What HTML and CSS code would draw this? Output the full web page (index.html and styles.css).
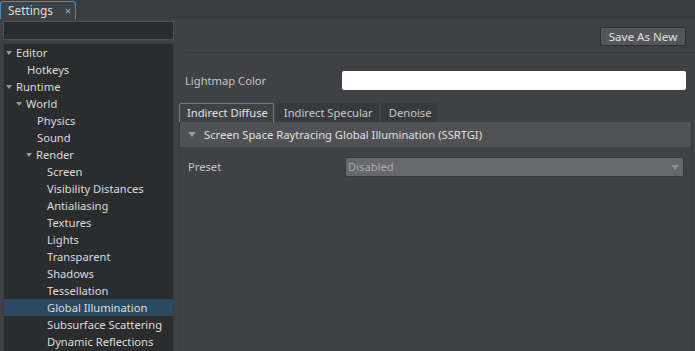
FILE: index.html
```html
<!DOCTYPE html>
<html lang="en">
<head>
  <meta charset="UTF-8">
  <title>Settings</title>
  <link rel="stylesheet" href="styles.css">
</head>
<body>
  <div class="tabstrip">
    <div class="doc-tab">Settings <span class="close">&#215;</span></div>
  </div>

  <div class="main">
    <div class="side">
      <div class="search"></div>
      <div class="tree">
        <div class="row l0"><span class="arrow"></span>Editor</div>
        <div class="row l1">Hotkeys</div>
        <div class="row l0"><span class="arrow"></span>Runtime</div>
        <div class="row l1"><span class="arrow"></span>World</div>
        <div class="row l2">Physics</div>
        <div class="row l2">Sound</div>
        <div class="row l2"><span class="arrow"></span>Render</div>
        <div class="row l3">Screen</div>
        <div class="row l3">Visibility Distances</div>
        <div class="row l3">Antialiasing</div>
        <div class="row l3">Textures</div>
        <div class="row l3">Lights</div>
        <div class="row l3">Transparent</div>
        <div class="row l3">Shadows</div>
        <div class="row l3">Tessellation</div>
        <div class="row l3 selected">Global Illumination</div>
        <div class="row l3">Subsurface Scattering</div>
        <div class="row l3">Dynamic Reflections</div>
      </div>
    </div>

    <div class="content">
      <div class="toolbar">
        <button class="btn">Save As New</button>
      </div>

      <div class="field top-field">
        <label>Lightmap Color</label>
        <div class="color-box"></div>
      </div>

      <div class="tabs">
        <div class="tab active">Indirect Diffuse</div>
        <div class="tab">Indirect Specular</div>
        <div class="tab">Denoise</div>
      </div>

      <div class="pane">
        <div class="group-head"><span class="arrow"></span>Screen Space Raytracing Global Illumination (SSRTGI)</div>
        <div class="field">
          <label>Preset</label>
          <div class="combo">Disabled<span class="combo-arrow"></span></div>
        </div>
      </div>
    </div>
  </div>
</body>
</html>
```

FILE: styles.css
```css
body {
  margin: 0;
  background: #404145;
  color: #dcdcdc;
  font-family: "Noto Sans", "DejaVu Sans", sans-serif;
  font-size: 11.2px;
  height: 351px;
  overflow: hidden;
}
.tabstrip {
  height: 19px;
  background: #3b3c3f;
  padding-top: 1px;
  box-sizing: border-box;
}
.doc-tab {
  width: 76px;
  height: 18px;
  box-sizing: border-box;
  border: 1px solid #3a8fd0;
  border-bottom: none;
  border-radius: 3px 3px 0 0;
  background: #404145;
  padding-left: 7px;
  line-height: 17px;
  font-size: 11.8px;
  position: relative;
}
.doc-tab .close {
  position: absolute;
  right: 4px;
  top: 0;
  color: #a8a8a8;
  font-size: 11px;
}
.main {
  display: flex;
  height: 332px;
}
.side {
  width: 171px;
  margin-left: 3px;
  padding-top: 2px;
  display: flex;
  flex-direction: column;
  gap: 3px;
}
.search {
  height: 19px;
  background: #2a2b2d;
  border: 1px solid #4f5054;
  box-sizing: border-box;
}
.tree {
  flex: 1;
  background: #2b2c2e;
  border: 1px solid #3a3b3e;
  border-bottom: none;
}
.row {
  height: 17px;
  line-height: 17px;
  white-space: nowrap;
  position: relative;
}
.l0 { padding-left: 13px; }
.l1 { padding-left: 23px; }
.l2 { padding-left: 33px; }
.l3 { padding-left: 43px; }
.row.selected {
  background: #2b4a61;
}
.arrow {
  display: inline-block;
  width: 0;
  height: 0;
  border-left: 3.5px solid transparent;
  border-right: 3.5px solid transparent;
  border-top: 4px solid #9a9a9a;
  margin-left: -11px;
  margin-right: 4px;
  vertical-align: 2px;
}
.content {
  flex: 1;
  margin-left: 5px;
  display: flex;
  flex-direction: column;
}
.toolbar {
  display: flex;
  justify-content: flex-end;
  padding: 8px 9px 6px 0;
  margin-left: 6px;
  border-bottom: 1px solid #37383b;
}
.btn {
  width: 86px;
  height: 19px;
  background: #55565a;
  border: 1px solid #2e2f32;
  border-radius: 2px;
  color: #e0e0e0;
  font: inherit;
  font-size: 11.6px;
  padding: 0;
}
.field {
  display: flex;
  align-items: center;
  height: 19px;
}
.field label {
  width: 157px;
  color: #c4c4c4;
}
.top-field {
  margin: 18px 9px 0 6px;
}
.color-box {
  flex: 1;
  height: 19px;
  background: #fff;
  border-radius: 2px;
}
.tabs {
  display: flex;
  gap: 2px;
  margin-top: 13px;
  height: 19px;
}
.tab {
  padding: 0 5px 0 7px;
  line-height: 18px;
  background: #38393c;
  border: 1px solid transparent;
  border-bottom: none;
  border-radius: 2px 2px 0 0;
  color: #c8c8c8;
}
.tab.active {
  border-color: #3a8fd0;
  background: #404145;
  color: #e4e4e4;
}
.pane {
  flex: 1;
  margin-right: 3px;
  border-left: 1px solid #38393c;
  border-right: 1px solid #38393c;
}
.group-head {
  height: 25px;
  line-height: 25px;
  background: #505155;
  padding-left: 22px;
  color: #e0e0e0;
}
.group-head .arrow {
  margin-left: -14px;
  margin-right: 8px;
  border-left-width: 4px;
  border-right-width: 4px;
  border-top-width: 5px;
}
.pane .field {
  margin: 10px 7px 0 8px;
}
.combo {
  flex: 1;
  height: 18px;
  line-height: 18px;
  background: #67686c;
  border: 1px solid #38393c;
  border-radius: 2px;
  padding-left: 2px;
  color: #a8a8a8;
  position: relative;
}
.combo-arrow {
  position: absolute;
  right: 4px;
  top: 7px;
  border-left: 4px solid transparent;
  border-right: 4px solid transparent;
  border-top: 5px solid #8d8e91;
}
```
